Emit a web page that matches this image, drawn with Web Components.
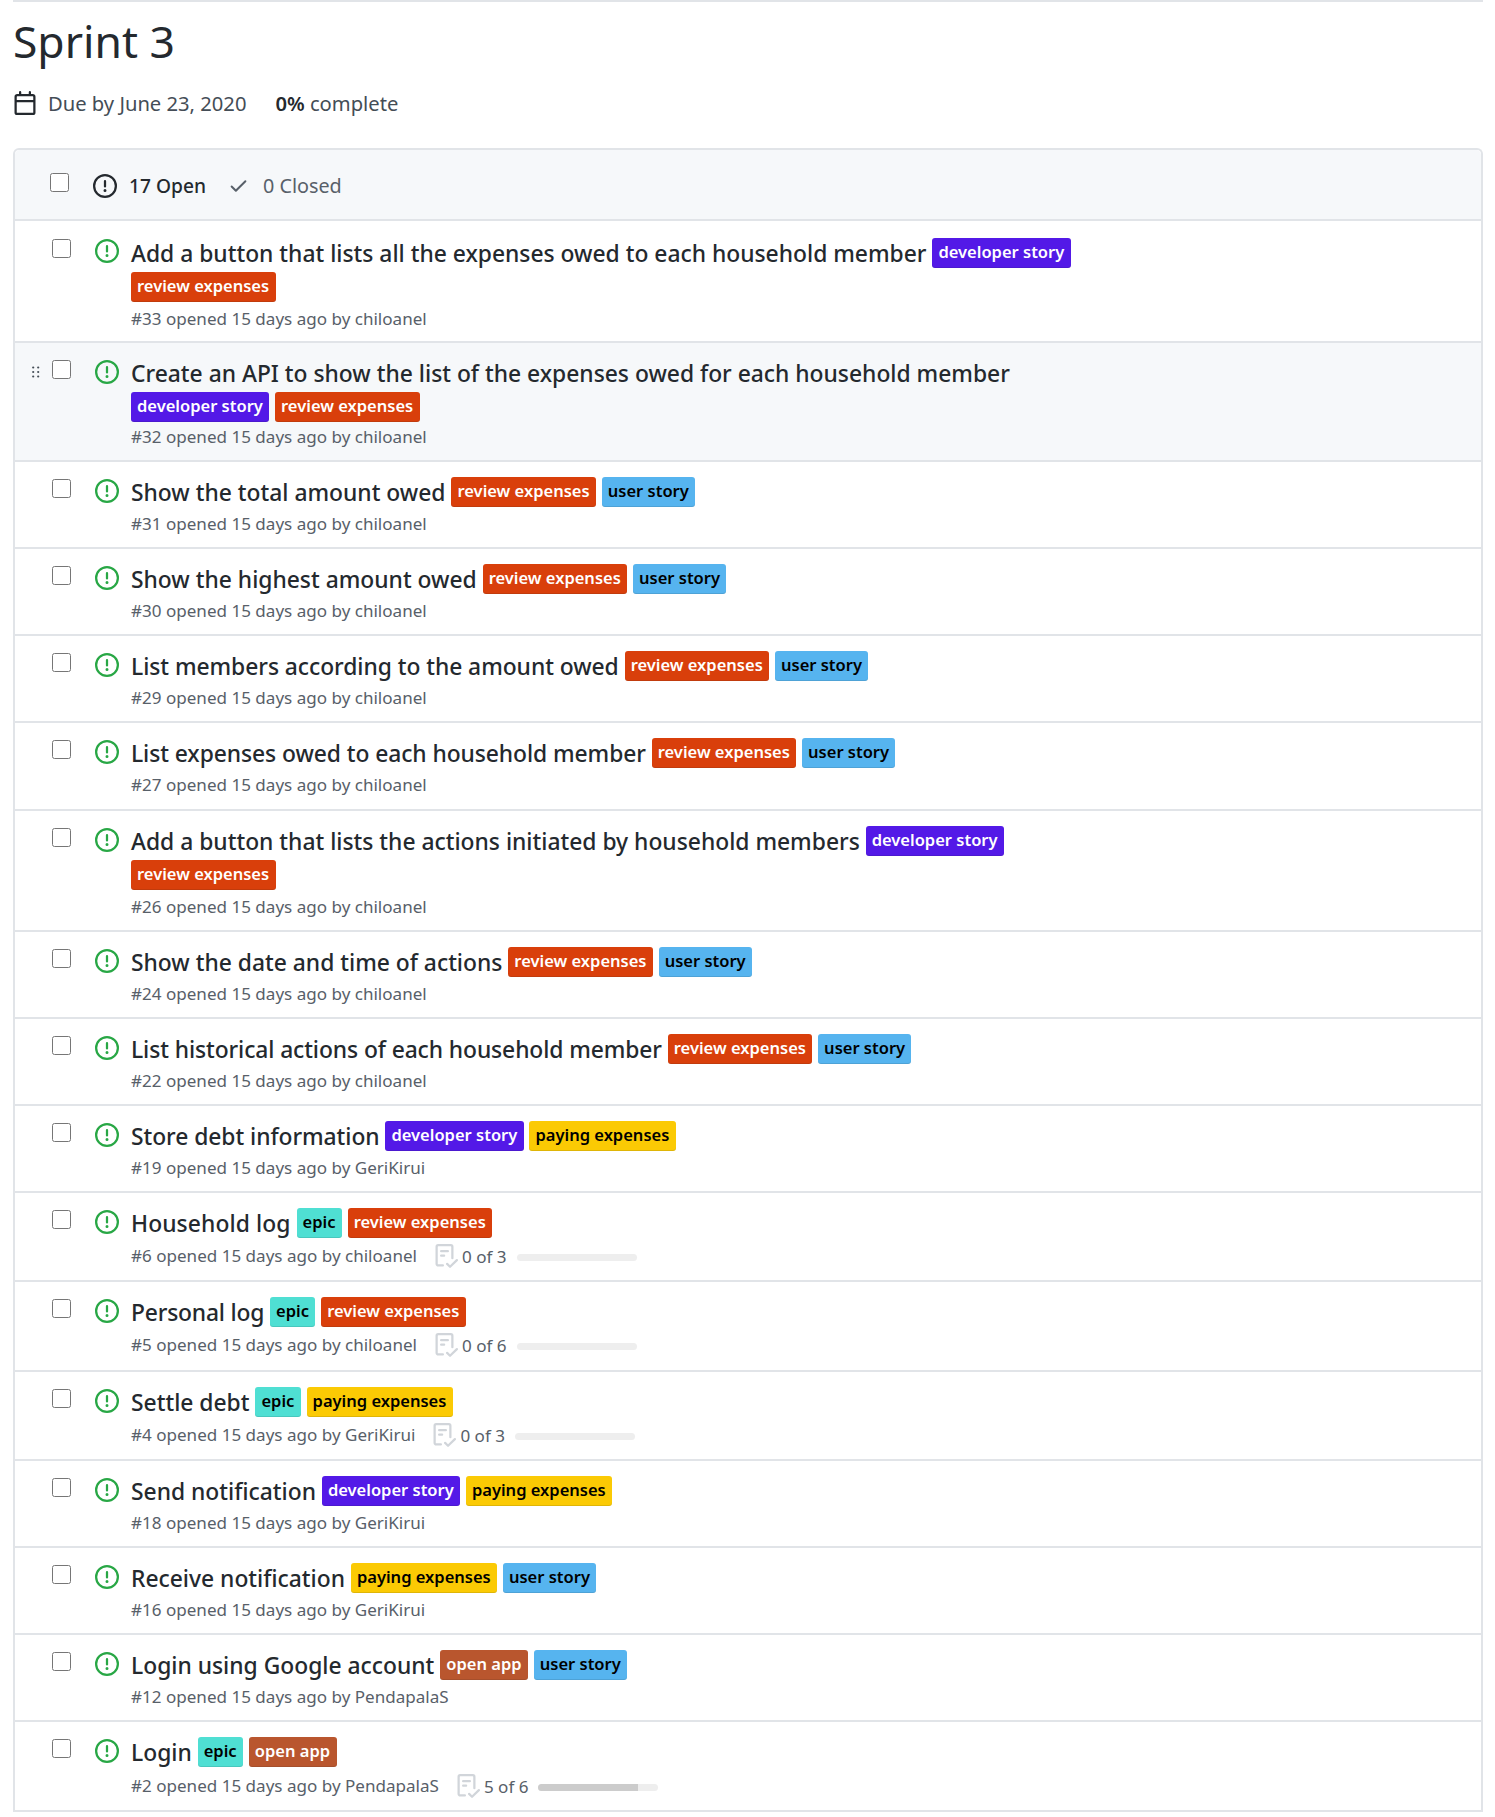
<!doctype html>
<html lang="en"><head><meta charset="utf-8"><title>Sprint 3</title>
<style>
html,body{margin:0;background:#fff}
body{font-family:"Noto Sans","Open Sans",sans-serif;color:#24292e}
</style></head>
<body>
<sprint-page>
  <milestone-head slot="head" name="Sprint 3" due="Due by June 23, 2020" pct="0%"></milestone-head>
  <issue-list open="17 Open" closed="0 Closed">
    <issue-row num="33" author="chiloanel" text="Add a button that lists all the expenses owed to each household member"><issue-label kind="dev">developer story</issue-label><issue-label kind="rev">review expenses</issue-label></issue-row>
    <issue-row hover num="32" author="chiloanel" text="Create an API to show the list of the expenses owed for each household member"><issue-label kind="dev">developer story</issue-label><issue-label kind="rev">review expenses</issue-label></issue-row>
    <issue-row num="31" author="chiloanel" text="Show the total amount owed"><issue-label kind="rev">review expenses</issue-label><issue-label kind="user">user story</issue-label></issue-row>
    <issue-row num="30" author="chiloanel" text="Show the highest amount owed"><issue-label kind="rev">review expenses</issue-label><issue-label kind="user">user story</issue-label></issue-row>
    <issue-row num="29" track="-.045" author="chiloanel" text="List members according to the amount owed"><issue-label kind="rev">review expenses</issue-label><issue-label kind="user">user story</issue-label></issue-row>
    <issue-row num="27" track="-.07" author="chiloanel" text="List expenses owed to each household member"><issue-label kind="rev">review expenses</issue-label><issue-label kind="user">user story</issue-label></issue-row>
    <issue-row num="26" author="chiloanel" text="Add a button that lists the actions initiated by household members"><issue-label kind="dev">developer story</issue-label><issue-label kind="rev">review expenses</issue-label></issue-row>
    <issue-row num="24" author="chiloanel" text="Show the date and time of actions"><issue-label kind="rev">review expenses</issue-label><issue-label kind="user">user story</issue-label></issue-row>
    <issue-row num="22" track="-.09" author="chiloanel" text="List historical actions of each household member"><issue-label kind="rev">review expenses</issue-label><issue-label kind="user">user story</issue-label></issue-row>
    <issue-row num="19" track="-.05" author="GeriKirui" text="Store debt information"><issue-label kind="dev">developer story</issue-label><issue-label kind="pay">paying expenses</issue-label></issue-row>
    <issue-row num="6" track=".09" author="chiloanel" text="Household log" tasks="0 of 3" pct="0"><issue-label kind="epic">epic</issue-label><issue-label kind="rev">review expenses</issue-label></issue-row>
    <issue-row num="5" track="-.18" author="chiloanel" text="Personal log" tasks="0 of 6" pct="0"><issue-label kind="epic">epic</issue-label><issue-label kind="rev">review expenses</issue-label></issue-row>
    <issue-row num="4" author="GeriKirui" text="Settle debt" tasks="0 of 3" pct="0"><issue-label kind="epic">epic</issue-label><issue-label kind="pay">paying expenses</issue-label></issue-row>
    <issue-row num="18" author="GeriKirui" text="Send notification"><issue-label kind="dev">developer story</issue-label><issue-label kind="pay">paying expenses</issue-label></issue-row>
    <issue-row num="16" author="GeriKirui" text="Receive notification"><issue-label kind="pay">paying expenses</issue-label><issue-label kind="user">user story</issue-label></issue-row>
    <issue-row num="12" author="PendapalaS" text="Login using Google account"><issue-label kind="app">open app</issue-label><issue-label kind="user">user story</issue-label></issue-row>
    <issue-row num="2" author="PendapalaS" text="Login" tasks="5 of 6" pct="83.3"><issue-label kind="epic">epic</issue-label><issue-label kind="app">open app</issue-label></issue-row>
  </issue-list>
</sprint-page>
<script>
const ISSUE='M8 1.5a6.5 6.5 0 100 13 6.5 6.5 0 000-13zM0 8a8 8 0 1116 0A8 8 0 010 8zm9 3a1 1 0 11-2 0 1 1 0 012 0zm-.25-6.25a.75.75 0 00-1.5 0v3.5a.75.75 0 001.5 0v-3.5z';
const CHECK='M13.78 4.22a.75.75 0 010 1.06l-7.25 7.25a.75.75 0 01-1.06 0L2.22 9.28a.75.75 0 011.06-1.06L6 10.94l6.72-6.72a.75.75 0 011.06 0z';
const CAL='M4.75 0a.75.75 0 01.75.75V2h5V.75a.75.75 0 011.5 0V2h1.25c.966 0 1.75.784 1.75 1.75v10.5A1.75 1.75 0 0113.25 16H2.75A1.75 1.75 0 011 14.25V3.75C1 2.784 1.784 2 2.75 2H4V.75A.75.75 0 014.75 0zm0 3.5h8.5a.25.25 0 01.25.25V6h-11V3.75a.25.25 0 01.25-.25h2zm-2.25 4v6.75c0 .138.112.25.25.25h10.5a.25.25 0 00.25-.25V7.5h-11z';
const LIST='M2.5 1.75a.25.25 0 01.25-.25h8.5a.25.25 0 01.25.25v7.736a.75.75 0 101.5 0V1.75A1.75 1.75 0 0011.25 0h-8.5A1.75 1.75 0 001 1.75v11.5c0 .966.784 1.75 1.75 1.75h3.17a.75.75 0 000-1.5H2.75a.25.25 0 01-.25-.25V1.75zM4.75 4a.75.75 0 000 1.5h4.5a.75.75 0 000-1.5h-4.5zM4 7.75A.75.75 0 014.75 7h2a.75.75 0 010 1.5h-2A.75.75 0 014 7.75zm11.774 3.537a.75.75 0 00-1.048-1.074L10.7 14.145 9.281 12.72a.75.75 0 00-1.062 1.058l1.943 1.95a.75.75 0 001.055.008l4.557-4.45z';
const svg=(d,s,c)=>`<svg width="${s}" height="${s}" viewBox="0 0 16 16" fill="${c}" aria-hidden="true" style="display:block;flex:none"><path fill-rule="evenodd" d="${d}"/></svg>`;
const esc=s=>String(s||'').replace(/&/g,'&amp;').replace(/</g,'&lt;').replace(/"/g,'&quot;');

customElements.define('sprint-page',class extends HTMLElement{
  constructor(){super();this.attachShadow({mode:'open'}).innerHTML=`<style>
    :host{display:block;padding:0 12px 0 13px}
    .rule{border-top:2px solid #e1e4e8}
  </style><div class="rule"><slot name="head"></slot><slot></slot></div>`;}
});

customElements.define('milestone-head',class extends HTMLElement{
  connectedCallback(){
    if(this.shadowRoot)return;
    this.attachShadow({mode:'open'}).innerHTML=`<style>
      :host{display:block;height:146px}
      h1{margin:0;font-size:44.4px;font-weight:400;line-height:60px;padding-top:9px;color:#24292e}
      .due{display:flex;align-items:center;font-size:20.2px;line-height:28px;margin-top:18px;color:#24292e}
      .cal{margin-right:11px}
      .txt{color:#444d56}
      .pct{margin-left:29px;color:#444d56}
      b{font-weight:600;color:#24292e}
    </style>
    <h1>${esc(this.getAttribute('name'))}</h1>
    <div class="due"><span class="cal">${svg(CAL,24,'#24292e')}</span><span class="txt">${esc(this.getAttribute('due'))}</span><span class="pct"><b>${esc(this.getAttribute('pct'))}</b> complete</span></div>`;
  }
});

customElements.define('issue-list',class extends HTMLElement{
  connectedCallback(){
    if(this.shadowRoot)return;
    this.attachShadow({mode:'open'}).innerHTML=`<style>
      :host{display:block;border:2px solid #e1e4e8;border-bottom:0;border-radius:6px 6px 0 0}
      .bar{display:flex;align-items:center;height:67px;padding-top:2px;background:#f6f8fa;border-bottom:2px solid #e1e4e8;border-radius:5px 5px 0 0;padding-left:35px;font-size:19.8px;line-height:28px}
      input{width:19px;height:19px;margin:0 24px 6px 0;flex:none}
      .open{display:flex;align-items:center;font-weight:500;font-size:19.2px;color:#24292e}
      .open svg{margin-right:12px}
      .closed{display:flex;align-items:center;margin-left:22px;color:#586069}
      .closed svg{margin-right:14px}
    </style>
    <div class="bar"><input type="checkbox" aria-label="Select all">
      <span class="open">${svg(ISSUE,24,'#24292e')}${esc(this.getAttribute('open'))}</span>
      <span class="closed">${svg(CHECK,21,'#586069')}${esc(this.getAttribute('closed'))}</span>
    </div><slot></slot>`;
  }
});

customElements.define('issue-row',class extends HTMLElement{
  connectedCallback(){
    if(this.shadowRoot)return;
    const t=this.getAttribute('tasks'),p=this.getAttribute('pct'),tr=this.getAttribute('track')||0;
    const task=t?`<span class="tasks">${svg(LIST,24,'#d1d5da')}<span class="tt">${esc(t)}</span><span class="bar"><i style="width:${p}%"></i></span></span>`:'';
    const grab=this.hasAttribute('hover')?`<svg class="grab" width="8" height="12" viewBox="0 0 8 12" fill="#444d56" aria-hidden="true"><circle cx="1.2" cy="1.5" r="1.1"/><circle cx="6.2" cy="1.5" r="1.1"/><circle cx="1.2" cy="6" r="1.1"/><circle cx="6.2" cy="6" r="1.1"/><circle cx="1.2" cy="10.5" r="1.1"/><circle cx="6.2" cy="10.5" r="1.1"/></svg>`:'';
    this.attachShadow({mode:'open'}).innerHTML=`<style>
      :host{display:flex;position:relative;border-bottom:2px solid #e1e4e8;background:#fff;padding-left:37px}
      :host(:first-of-type){padding-top:1px}
      :host(:first-of-type) .main{padding-top:15px;padding-bottom:10.1px}
      :host([hover]){background:#f6f8fa}
      :host([hover]) .meta{margin-top:0;}
      .grab{position:absolute;left:17px;top:23px}
      input{width:19px;height:19px;margin:17px 24px 0 0;flex:none}
      .st{margin-top:17px;margin-right:12px;flex:none}
      .main{width:970px;padding:14px 0 11.1px}
      .title{font-size:22.84px;font-weight:500;line-height:34px;color:#24292e;letter-spacing:${tr}px}
      .meta{display:flex;align-items:center;font-size:17.06px;line-height:24px;margin-top:2px;color:#586069;white-space:nowrap}
      .tasks{display:inline-flex;align-items:center;margin-left:17px;height:26.3px}
      .tt{margin-left:4px;margin-top:2px}
      .bar{display:inline-block;width:120px;height:7px;border-radius:4px;background:#eee;margin-left:10px;overflow:hidden;margin-top:3px}
      .bar i{display:block;height:100%;background:#ccc}
      ::slotted(issue-label){letter-spacing:0}
    </style>${grab}<input type="checkbox" aria-label="Select issue"><span class="st">${svg(ISSUE,24,'#28a745')}</span>
    <div class="main"><div class="title">${esc(this.getAttribute('text'))} <slot></slot></div>
    <div class="meta"><span>#${esc(this.getAttribute('num'))} opened 15 days ago by ${esc(this.getAttribute('author'))}</span>${task}</div></div>`;
  }
});

const KINDS={dev:['#5319e7','#fff'],rev:['#d93f0b','#fff'],user:['#56b4ef','#000'],pay:['#fbca04','#000'],epic:['#4fdfd3','#000'],app:['#b9562e','#fff']};
customElements.define('issue-label',class extends HTMLElement{
  connectedCallback(){
    if(this.shadowRoot)return;
    const k=KINDS[this.getAttribute('kind')];
    this.attachShadow({mode:'open'}).innerHTML=`<style>
      :host{display:inline-block;height:30px;line-height:27px;padding:0 6.4px 0 6px;margin-right:5.8px;border-radius:3px;font-size:16.5px;font-weight:600;vertical-align:4px;background:${k[0]};color:${k[1]};box-shadow:inset 0 -1px 0 rgba(27,31,35,.12)}
    </style><slot></slot>`;
  }
});
</script>
</body></html>
